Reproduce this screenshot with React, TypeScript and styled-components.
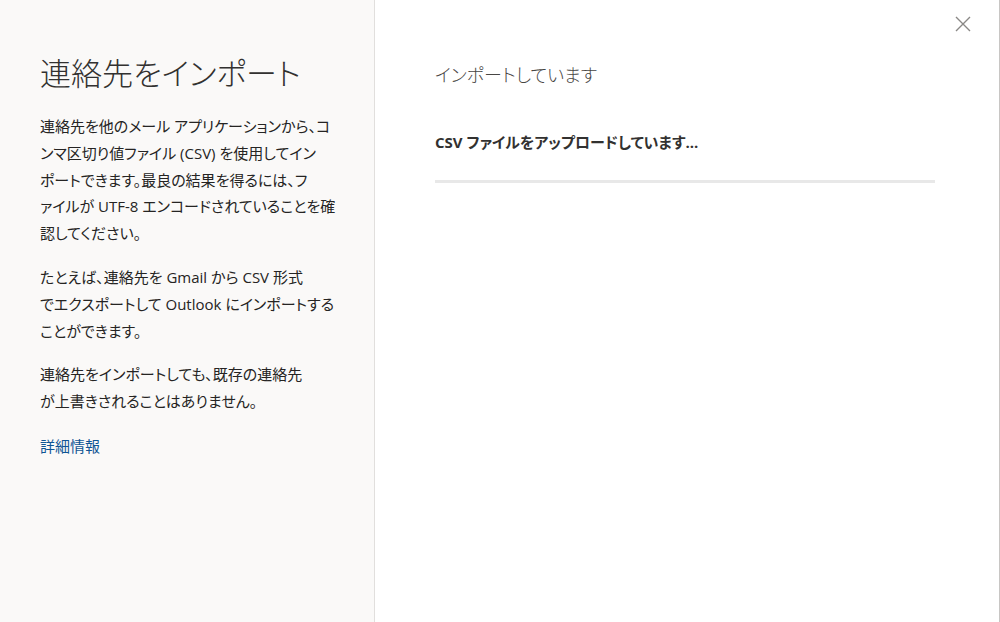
import { createGlobalStyle, styled } from "styled-components";

const GlobalStyle = createGlobalStyle`
    html, body {
        margin: 0;
        padding: 0;
        height: 100%;
        background: #ffffff;
    }
    #root {
        height: 100%;
    }
`;

const font = `"Segoe UI", "Open Sans", "Noto Sans CJK JP", sans-serif`;

//whole dialog, side panel + main area
const Dialog = styled.div`
    position: relative;
    display: flex;
    height: 100vh;
    font-family: ${font};
    font-feature-settings: "palt";
    color: #323130;
    border-right: 1px solid #c8c6c4;
    box-sizing: border-box;
`;

const SidePanel = styled.aside`
    width: 375px;
    flex-shrink: 0;
    background-color: #faf9f8;
    border-right: 1px solid #e1dfdd;
    padding: 46px 20px 0 40px;
    box-sizing: border-box;
`;

const Title = styled.h1`
    margin: 0 0 13px 0;
    font-size: 31px;
    font-weight: 300;
    line-height: 54px;
    color: #323130;
`;

const Paragraph = styled.p`
    margin: 0 0 17px 0;
    font-size: 15px;
    line-height: 26.8px;
    white-space: nowrap;
    color: #252423;
`;

const MoreLink = styled.a`
    display: inline-block;
    margin-top: 1px;
    font-size: 15px;
    line-height: 27px;
    color: #0f5594;
    text-decoration: none;
`;

const MainArea = styled.main`
    flex: 1;
    padding: 60px 0 0 60px;
`;

const Heading = styled.h2`
    margin: 0;
    font-size: 18px;
    font-weight: 300;
    line-height: 30px;
    color: #484644;
`;

const Status = styled.div`
    margin-top: 41px;
    font-size: 15px;
    font-weight: 700;
    line-height: 22px;
    color: #323130;
`;

const ProgressTrack = styled.div`
    margin-top: 27px;
    width: 500px;
    height: 3px;
    background-color: #e8e8e8;
`;

const CloseButton = styled.button`
    position: absolute;
    top: 14px;
    right: 26px;
    width: 20px;
    height: 20px;
    padding: 0;
    border: none;
    background: transparent;
    display: flex;
    align-items: center;
    justify-content: center;
    cursor: pointer;
`;

export default function App() {
    return (
        <>
            <GlobalStyle />
            <Dialog>
                <SidePanel>
                    <Title>連絡先をインポート</Title>
                    <Paragraph>
                        連絡先を他のメール アプリケーションから、コ<br />
                        ンマ区切り値ファイル (CSV) を使用してイン<br />
                        ポートできます。最良の結果を得るには、フ<br />
                        ァイルが UTF-8 エンコードされていることを確<br />
                        認してください。
                    </Paragraph>
                    <Paragraph>
                        たとえば、連絡先を Gmail から CSV 形式<br />
                        でエクスポートして Outlook にインポートする<br />
                        ことができます。
                    </Paragraph>
                    <Paragraph>
                        連絡先をインポートしても、既存の連絡先<br />
                        が上書きされることはありません。
                    </Paragraph>
                    <MoreLink href="#">詳細情報</MoreLink>
                </SidePanel>
                <MainArea>
                    <Heading>インポートしています</Heading>
                    <Status>CSV ファイルをアップロードしています...</Status>
                    <ProgressTrack />
                </MainArea>
                <CloseButton aria-label="閉じる">
                    <svg width="16" height="16" viewBox="0 0 16 16">
                        <path d="M1 1 L15 15 M15 1 L1 15" stroke="#8a8886" strokeWidth="1.4" fill="none" />
                    </svg>
                </CloseButton>
            </Dialog>
        </>
    );
}
